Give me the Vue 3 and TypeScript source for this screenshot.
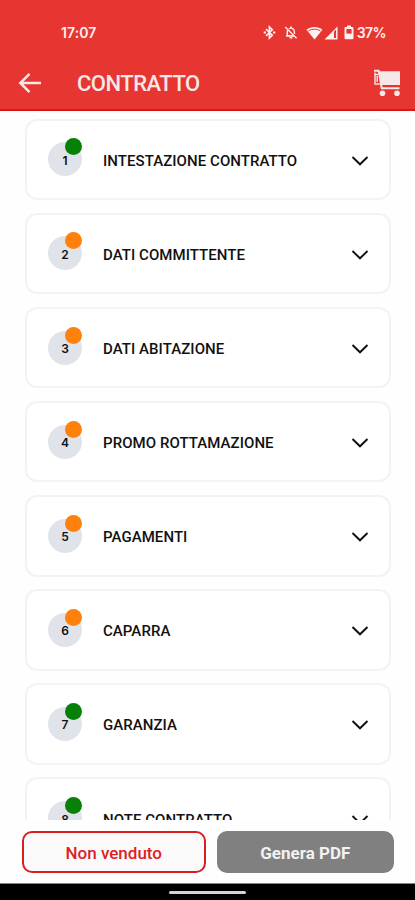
<script setup lang="ts">
interface Section {
  id: number
  title: string
  done: boolean
}

const sections: Section[] = [
  { id: 1, title: 'INTESTAZIONE CONTRATTO', done: true },
  { id: 2, title: 'DATI COMMITTENTE', done: false },
  { id: 3, title: 'DATI ABITAZIONE', done: false },
  { id: 4, title: 'PROMO ROTTAMAZIONE', done: false },
  { id: 5, title: 'PAGAMENTI', done: false },
  { id: 6, title: 'CAPARRA', done: false },
  { id: 7, title: 'GARANZIA', done: true },
  { id: 8, title: 'NOTE CONTRATTO', done: true },
]
</script>

<template>
  <div class="screen">
    <header class="header">
      <div class="status">
        <span class="time">17:07</span>
        <div class="indicators">
          <svg class="bluetooth" width="13" height="15" viewBox="0 0 13 15" fill="none" stroke="currentColor" stroke-width="1.6">
            <path d="M3 4.2 9.3 10.2 6.4 13V2L9.3 4.8 3 10.8" />
            <path d="M.7 7.5h2.3M10 7.5h2.300" stroke-width="2" />
          </svg>
          <svg class="bell" width="14" height="15" viewBox="0 0 15 15" fill="none" stroke="currentColor" stroke-width="1.5">
            <path d="M1.3 1.5 13.5 13.7M3.9 4.9C3.5 5.7 3.5 6.5 3.5 7.2V11H10.7M2 11.2h9M5.3 3.4C8.3 1.8 11.2 3.6 11.2 7v2" />
            <path d="M6 13.1h3M7.5 1v2" stroke-width="1.7" />
          </svg>
          <svg class="wifi" width="17" height="14" viewBox="0 0 17 14">
            <path d="M.5 3.8C5 .1 12 .1 16.5 3.8L8.5 13.5z" fill="currentColor" />
            <path d="M2.500 4.900C6.300 2.600 10.700 2.600 14.500 4.900" fill="none" stroke="#e73532" stroke-width="1" />
          </svg>
          <svg class="signal" width="14" height="14" viewBox="0 0 14 14">
            <path d="M13.500.5V13.500H.5z" fill="currentColor" />
            <path d="M10 5.500 12 3.500V12H10z" fill="#e73532" />
          </svg>
          <svg class="battery" width="10" height="15" viewBox="0 0 10 15">
            <path d="M3 .5h4v1.600h1.300q1.200 0 1.200 1.200v9.800q0 1.200-1.200 1.200H1.700Q.5 14.300.5 13.100V3.300Q.5 2.100 1.700 2.100H3z" fill="currentColor" />
            <path d="M2.400 4h5.200v4.600H2.400z" fill="#e73532" />
          </svg>
          <span class="percent">37%</span>
        </div>
      </div>
      <div class="toolbar">
        <svg class="back" width="24" height="22" viewBox="0 0 24 22" fill="none" stroke="currentColor" stroke-width="2.500">
          <path d="M23 11H2.500M11.500 1.900 2.300 11l9.200 9.100" />
        </svg>
        <h1>CONTRATTO</h1>
        <svg class="cart" width="28" height="28" viewBox="0 0 28 28">
          <path d="M6.500 2.200H27V16H8.500z" fill="currentColor" />
          <path d="M1 1.700H5.700L8.700 19.200H26.500" fill="none" stroke="currentColor" stroke-width="2" />
          <path d="M2 3.500V15M1.300 5.500h4M1.300 15h5.500M4.200 7v6" fill="none" stroke="currentColor" stroke-width="1.400" />
          <circle cx="9.500" cy="24.300" r="2.800" fill="currentColor" />
          <circle cx="24" cy="24.300" r="2.800" fill="currentColor" />
        </svg>
      </div>
    </header>

    <main class="sections">
      <section v-for="section in sections" :key="section.id" class="card">
        <div class="number">
          {{ section.id }}
          <i class="dot" :class="{ done: section.done }"></i>
        </div>
        <h2>{{ section.title }}</h2>
        <svg class="chevron" width="18" height="12" viewBox="0 0 18 12" fill="none" stroke="currentColor" stroke-width="1.900">
          <path d="M1.500 2 9 9.300 16.500 2" />
        </svg>
      </section>
    </main>

    <footer class="actions">
      <button class="unsold" type="button">Non venduto</button>
      <button class="generate" type="button">Genera PDF</button>
    </footer>
    <div class="navigation"><span></span></div>
  </div>
</template>

<style>
body {
  margin: 0;
  background: #fff;
}
</style>

<style scoped>
.screen {
  display: flex;
  flex-direction: column;
  width: 415px;
  height: 900px;
  overflow: hidden;
  box-sizing: border-box;
  background: #fefefe;
  font-family: Roboto, sans-serif;
}
.header {
  flex: none;
  box-sizing: border-box;
  height: 111px;
  padding-top: 22px;
  background: #e73532;
  border-bottom: 2px solid #d91717;
  color: #fff0f0;
}
.status {
  display: flex;
  align-items: center;
  justify-content: space-between;
  height: 21px;
  padding: 0 29px 0 61px;
  font-family: Inter, sans-serif;
  font-size: 14px;
  font-weight: 600;
}
.time {
  letter-spacing: 0.1px;
}
.indicators {
  display: flex;
  align-items: center;
}
.bell { margin-left: 8px; }
.wifi { margin-left: 8px; }
.signal { margin-left: 1px; }
.battery { margin-left: 6px; }
.percent {
  margin-left: 3px;
  letter-spacing: -0.6px;
}
.toolbar {
  display: flex;
  align-items: center;
  height: 66px;
  box-sizing: border-box;
  padding: 13px 14px 0 18px;
  color: #f6e8e8;
}
h1 {
  margin: 2px 0 0 35px;
  font-size: 22px;
  font-weight: 500;
  line-height: 28px;
  letter-spacing: -0.5px;
}
.cart { margin-left: auto; }
.sections {
  flex: none;
  display: flex;
  flex-direction: column;
  gap: 12.500px;
  box-sizing: border-box;
  height: 709px;
  padding: 7.600px 24.500px 0 25px;
  overflow: hidden;
}
.card {
  flex: none;
  display: flex;
  align-items: center;
  box-sizing: border-box;
  height: 81.600px;
  padding: 0 20px 0 21px;
  border: 2px solid #f2f3f3;
  border-radius: 12px;
  background: #fff;
  color: #111;
}
.number {
  position: relative;
  display: flex;
  align-items: center;
  justify-content: center;
  box-sizing: border-box;
  width: 34px;
  height: 34px;
  padding-top: 2px;
  border-radius: 50%;
  background: #e0e3e9;
  font-family: Inter, sans-serif;
  font-size: 12px;
  font-weight: 600;
}
.dot {
  position: absolute;
  top: -4px;
  right: 0;
  width: 17px;
  height: 17px;
  border-radius: 50%;
  background: #ff800b;
}
.dot.done { background: #078007; }
h2 {
  margin: 3px 0 0 21px;
  font-size: 15px;
  font-weight: 500;
  line-height: 20px;
  letter-spacing: 0.060px;
}
.chevron {
  margin-top: 3px;
  margin-left: auto;
}
.actions {
  flex: none;
  display: flex;
  gap: 10.500px;
  box-sizing: border-box;
  height: 63px;
  padding: 11px 21px 10px 21.500px;
  background: #fefefe;
}
button {
  box-sizing: border-box;
  height: 42px;
  padding: 2px 0 0;
  border: 0;
  border-radius: 10px;
  font-family: Roboto, sans-serif;
  font-size: 17px;
}
.unsold {
  width: 184.500px;
  border: 2px solid #dc1d20;
  background: #fafafa;
  color: #dc2226;
  font-weight: 500;
}
.generate {
  width: 177.500px;
  background: #808080;
  color: #f2f2f2;
  font-weight: 700;
}
.navigation {
  flex: none;
  display: flex;
  justify-content: center;
  box-sizing: border-box;
  height: 17px;
  padding-top: 7px;
  border-top: 1px solid #858585;
  background: #000;
}
.navigation span {
  width: 77px;
  height: 3px;
  border-radius: 2px;
  background: #d5d5d5;
}
</style>
